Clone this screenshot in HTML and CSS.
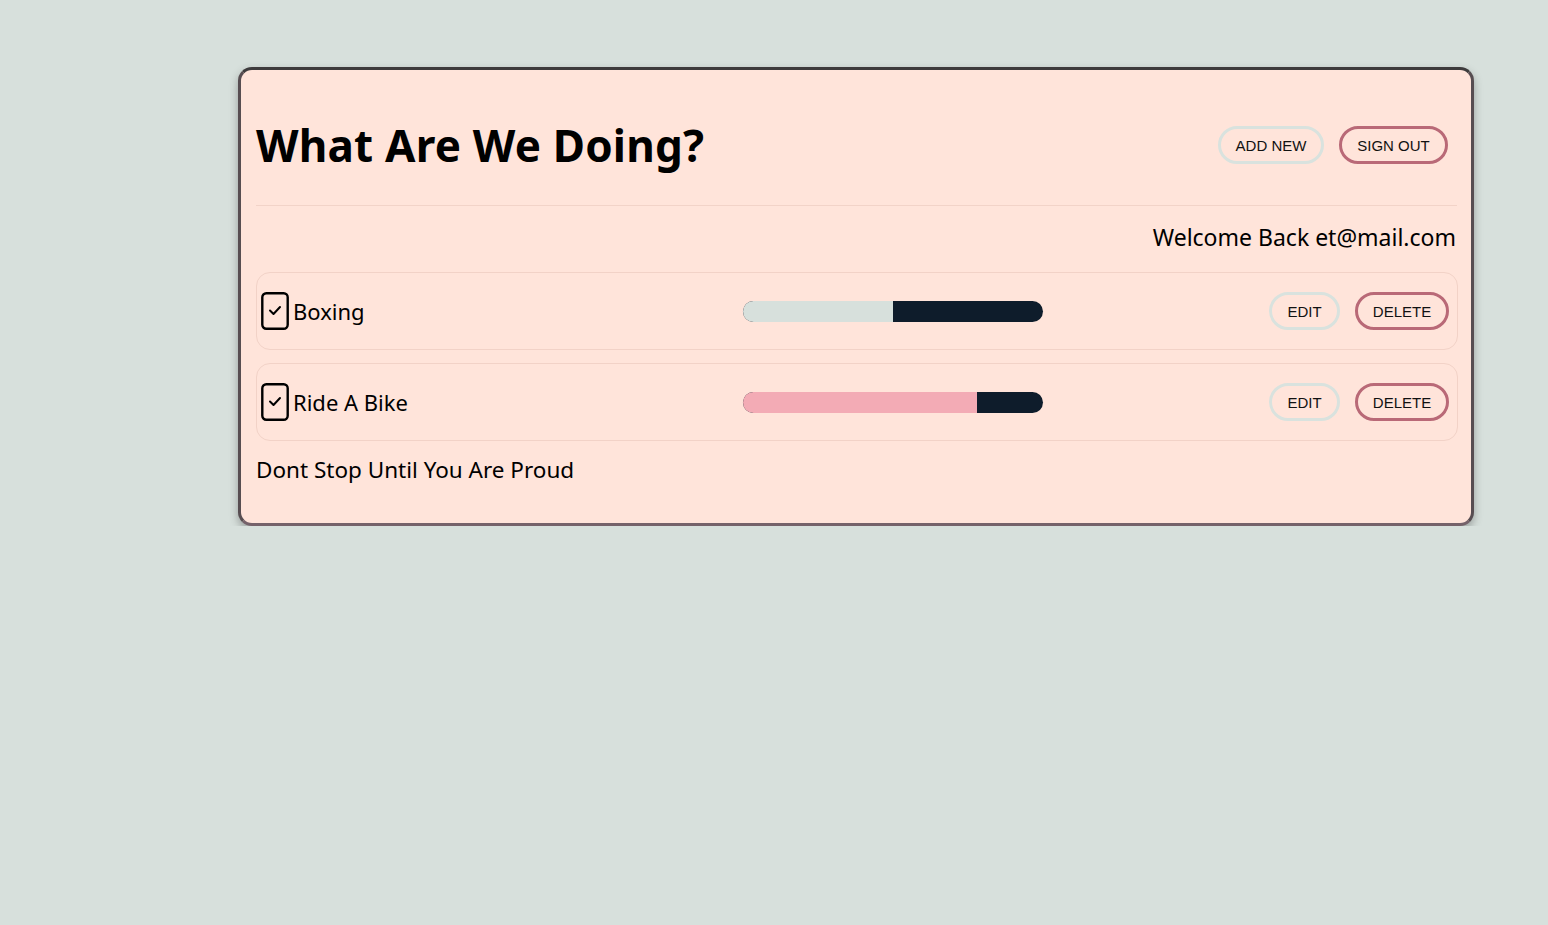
FILE: index.html
```html
<!DOCTYPE html>
<html lang="en">
<head>
<meta charset="utf-8">
<title>What Are We Doing?</title>
<link rel="stylesheet" href="styles.css">
</head>
<body>
<main class="page">
  <section class="card">
    <header class="header">
      <h1 class="title">What Are We Doing?</h1>
      <div class="actions">
        <button class="btn btn-light">ADD NEW</button>
        <button class="btn btn-rose">SIGN OUT</button>
      </div>
    </header>
    <p class="welcome">Welcome Back et@mail.com</p>
    <ul class="list">
      <li class="row">
        <div class="task">
          <svg class="check" width="28" height="38" viewBox="0 0 28 38"><rect x="1.3" y="1.3" width="25.4" height="35.4" rx="4" fill="none" stroke="#000" stroke-width="2.4"/><path d="M9 18.5 L12.5 22 L19 15" fill="none" stroke="#000" stroke-width="2" stroke-linecap="round" stroke-linejoin="round"/></svg>
          <span class="name">Boxing</span>
        </div>
        <div class="bar"><div class="fill fill-sage" style="width:50%"></div></div>
        <div class="row-actions">
          <button class="btn btn-light btn-edit">EDIT</button>
          <button class="btn btn-rose btn-del">DELETE</button>
        </div>
      </li>
      <li class="row">
        <div class="task">
          <svg class="check" width="28" height="38" viewBox="0 0 28 38"><rect x="1.3" y="1.3" width="25.4" height="35.4" rx="4" fill="none" stroke="#000" stroke-width="2.4"/><path d="M9 18.5 L12.5 22 L19 15" fill="none" stroke="#000" stroke-width="2" stroke-linecap="round" stroke-linejoin="round"/></svg>
          <span class="name">Ride A Bike</span>
        </div>
        <div class="bar"><div class="fill fill-pink" style="width:78%"></div></div>
        <div class="row-actions">
          <button class="btn btn-light btn-edit">EDIT</button>
          <button class="btn btn-rose btn-del">DELETE</button>
        </div>
      </li>
    </ul>
    <p class="motto">Dont Stop Until You Are Proud</p>
  </section>
</main>
</body>
</html>
```
FILE: styles.css
```css
html, body {
  margin: 0;
  padding: 0;
  background: #d7e0dc;
}
body {
  font-family: "Noto Sans", "Open Sans", sans-serif;
  color: #000;
}
.page {
  padding: 67px 74px 0 238px;
}
.card {
  box-sizing: border-box;
  width: 1236px;
  background: #ffe4da;
  border: 3px solid #574d51;
  border-top-color: #3d3b3c;
  border-bottom-color: #75626a;
  border-radius: 14px;
  padding: 15px 14px 38px 15px;
  box-shadow: 0 4px 8px rgba(60, 60, 60, 0.4);
}
.header {
  display: flex;
  align-items: center;
  justify-content: space-between;
  height: 120px;
  border-bottom: 1px solid #f2d3c8;
  padding-right: 9px;
}
.title {
  margin: 0;
  font-size: 44px;
  font-weight: 700;
  letter-spacing: 0.2px;
}
.actions {
  display: flex;
  gap: 15px;
}
.btn {
  font-family: "Liberation Sans", Arial, sans-serif;
  font-size: 15px;
  color: #111;
  background: transparent;
  border: 3px solid #d7e0dc;
  border-radius: 20px;
  height: 38px;
  padding: 0 15px;
  cursor: pointer;
}
.btn-light { border-color: #d9e2de; }
.btn-rose { border-color: #b96977; }
.btn-edit { width: 71px; padding: 0; }
.btn-del { width: 94px; padding: 0; }
.actions .btn-light { width: 106px; padding: 0; }
.actions .btn-rose { width: 109px; padding: 0; }
.welcome {
  margin: 16px 1px 20px 0;
  line-height: 30px;
  font-size: 23px;
  text-align: right;
}
.list {
  list-style: none;
  margin: 0;
  padding: 0;
  display: flex;
  flex-direction: column;
  gap: 13px;
}
.row {
  box-sizing: border-box;
  height: 78px;
  margin-right: -1px;
  border: 1.5px solid #f2d2c7;
  border-radius: 14px;
  display: grid;
  grid-template-columns: 482px 300px 1fr;
  align-items: center;
  padding: 0 8px 0 4px;
}
.task {
  display: flex;
  align-items: center;
  gap: 4px;
}
.check { display: block; }
.name {
  font-size: 22px;
}
.bar {
  height: 21px;
  border-radius: 11px;
  background: #0e1c2b;
  overflow: hidden;
}
.fill { height: 100%; }
.fill-sage { background: #d7e0dc; }
.fill-pink { background: #f3abb5; }
.row-actions {
  display: flex;
  justify-content: flex-end;
  gap: 15px;
}
.motto {
  margin: 14px 0 0 0;
  line-height: 30px;
  font-size: 22.5px;
}
```
